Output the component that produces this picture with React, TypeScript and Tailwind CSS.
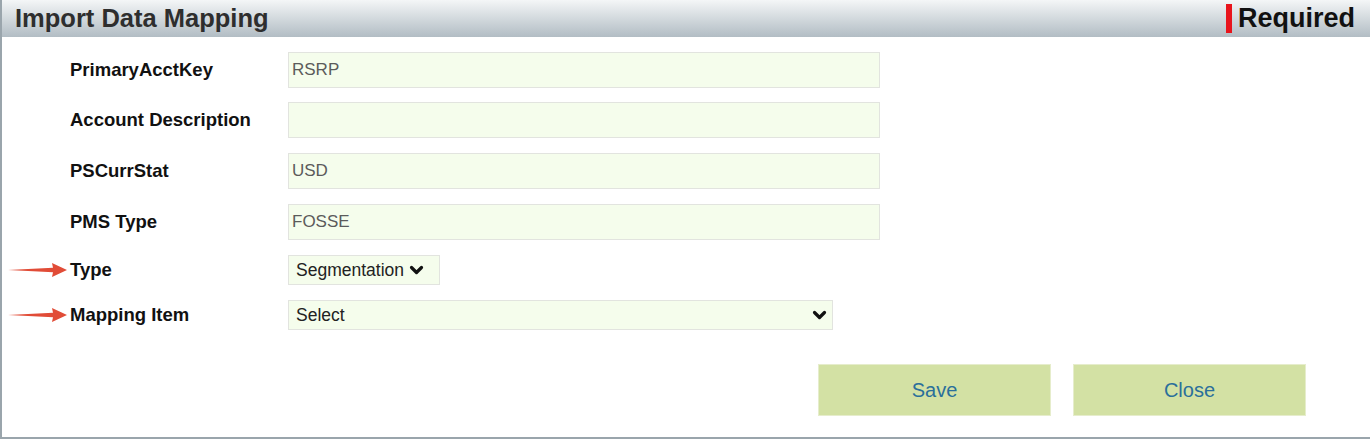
import React from "react";

const Arrow = () => (
  <svg width="60" height="16" viewBox="0 0 60 16" className="absolute left-[6px] top-1/2 -translate-y-1/2">
    <polygon points="0,8 45,5.8 44,1 59,8 44,15 45,10.2" fill="#e14c37" />
  </svg>
);

const Chevron = ({ className = "" }: { className?: string }) => (
  <svg width="15" height="10" viewBox="0 0 15 10" className={className}>
    <polyline points="2.5,2.5 7.5,7.5 12.5,2.5" fill="none" stroke="#111" strokeWidth="3.2" strokeLinecap="round" strokeLinejoin="round" />
  </svg>
);

const labelCls = "relative w-[286px] pl-[68px] shrink-0 font-bold text-[18.5px] text-[#111] whitespace-nowrap";

function TextRow({ label, value, mt }: { label: string; value: string; mt: string }) {
  return (
    <div className={`flex items-center ${mt}`}>
      <div className={labelCls}>{label}</div>
      <div className="w-[592px] h-[36px] bg-[#f5fdec] border border-[#e2e4df] flex items-center pl-[3px] text-[17px] text-[#5b5b5b]">
        {value}
      </div>
    </div>
  );
}

export default function App() {
  return (
    <div
      className="w-[1370px] h-[439px] bg-white border-l-2 border-b-2 border-[#9aa5ac] flex flex-col"
      style={{ fontFamily: '"Liberation Sans", Arial, sans-serif' }}
    >
      <div className="h-[37px] shrink-0 bg-gradient-to-b from-[#f4f6f7] to-[#b2bdc4] flex items-center justify-between pl-[13px] pr-[15px]">
        <div className="font-bold text-[25.5px] text-[#2e2e2e] leading-none">Import Data Mapping</div>
        <div className="flex items-center">
          <div className="w-[6px] h-[29px] bg-[#e8141c] mr-[6px]" />
          <div className="font-bold text-[27px] text-[#111] leading-none">Required</div>
        </div>
      </div>

      <TextRow label="PrimaryAcctKey" value="RSRP" mt="mt-[15px]" />
      <TextRow label="Account Description" value="" mt="mt-[14px]" />
      <TextRow label="PSCurrStat" value="USD" mt="mt-[15px]" />
      <TextRow label="PMS Type" value="FOSSE" mt="mt-[15px]" />

      <div className="flex items-center mt-[15px]">
        <div className={labelCls}>
          <Arrow />
          Type
        </div>
        <div className="w-[152px] h-[30px] bg-[#f5fdec] border border-[#e2e4df] flex items-center pl-[7px] text-[17.5px] text-[#222]">
          <span>Segmentation</span>
          <Chevron className="ml-[5px]" />
        </div>
      </div>

      <div className="flex items-center mt-[15px]">
        <div className={labelCls}>
          <Arrow />
          Mapping Item
        </div>
        <div className="w-[545px] h-[30px] bg-[#f5fdec] border border-[#e2e4df] flex items-center justify-between pl-[7px] pr-[5px] text-[17.5px] text-[#222]">
          <span>Select</span>
          <Chevron />
        </div>
      </div>

      <div className="flex justify-end gap-[22px] pr-[64px] mt-[34px]">
        <button className="w-[233px] h-[52px] bg-[#d3e1a4] border border-[#e6edcc] text-[20px] text-[#2a6f9b]">Save</button>
        <button className="w-[233px] h-[52px] bg-[#d3e1a4] border border-[#e6edcc] text-[20px] text-[#2a6f9b]">Close</button>
      </div>
    </div>
  );
}
